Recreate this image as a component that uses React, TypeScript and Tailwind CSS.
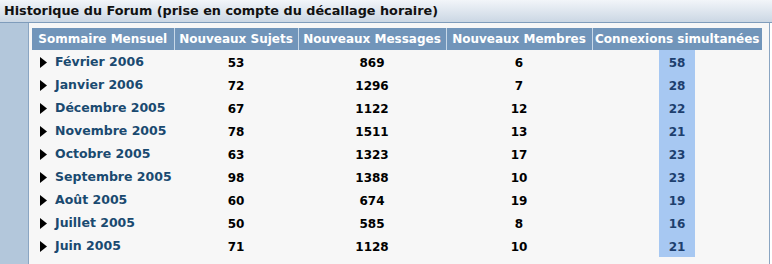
const rows = [
  { month: 'Février 2006', sujets: 53, messages: 869, membres: 6, connexions: 58 },
  { month: 'Janvier 2006', sujets: 72, messages: 1296, membres: 7, connexions: 28 },
  { month: 'Décembre 2005', sujets: 67, messages: 1122, membres: 12, connexions: 22 },
  { month: 'Novembre 2005', sujets: 78, messages: 1511, membres: 13, connexions: 21 },
  { month: 'Octobre 2005', sujets: 63, messages: 1323, membres: 17, connexions: 23 },
  { month: 'Septembre 2005', sujets: 98, messages: 1388, membres: 10, connexions: 23 },
  { month: 'Août 2005', sujets: 60, messages: 674, membres: 19, connexions: 19 },
  { month: 'Juillet 2005', sujets: 50, messages: 585, membres: 8, connexions: 16 },
  { month: 'Juin 2005', sujets: 71, messages: 1128, membres: 10, connexions: 21 },
];

const headers = ['Sommaire Mensuel', 'Nouveaux Sujets', 'Nouveaux Messages', 'Nouveaux Membres', 'Connexions simultanées'];
const widths = ['w-[142px]', 'w-[124px]', 'w-[148px]', 'w-[146px]', 'w-[170px]'];

export default function App() {
  return (
    <div className="w-[772px] h-[264px] overflow-hidden bg-white font-['DejaVu_Sans',Verdana,sans-serif] font-bold text-[12px]">
      {/* Title bar */}
      <div className="h-[23px] flex items-center px-[4px] bg-gradient-to-b from-[#f2f5f9] to-[#cbd7e4] border-b border-[#7f9cbb] text-[#111] text-[12.8px]">
        Historique du Forum (prise en compte du décallage horaire)
      </div>

      <div className="flex h-[241px]">
        <div className="w-[29px] bg-[#b3c7db] border-r border-[#8aa5c2]" />
        <div className="w-[741px] bg-[#f7f7f7] border-r border-[#8aa5c2] pl-[3px] pt-[5px]">
          <table className="border-collapse">
            <thead>
              <tr className="bg-[#7195ba] text-white h-[22px]">
                {headers.map((h, i) => (
                  <th
                    key={h}
                    className={`${widths[i]} p-0 text-center font-bold ${i > 0 ? 'border-l border-[#c8d8e8]' : ''}`}
                  >
                    {h}
                  </th>
                ))}
              </tr>
            </thead>
            <tbody>
              {rows.map((r) => (
                <tr key={r.month} className="h-[23px]">
                  <td className="p-0 pl-[8px] pt-[2px]">
                    <div className="flex items-center gap-[8px] text-[#1a4a70] text-[12.5px]">
                      <svg width="7" height="11" viewBox="0 0 7 11">
                        <path d="M0 0 L7 5.5 L0 11 Z" fill="#000" />
                      </svg>
                      {r.month}
                    </div>
                  </td>
                  <td className="p-0 pt-[2px] text-center text-black">{r.sujets}</td>
                  <td className="p-0 pt-[2px] text-center text-black">{r.messages}</td>
                  <td className="p-0 pt-[2px] text-center text-black">{r.membres}</td>
                  <td className="p-0 h-[23px]">
                    <div className="mx-auto w-[36px] h-[23px] pt-[2px] bg-[#a7c8f2] flex items-center justify-center text-[#1d3f6e]">
                      {r.connexions}
                    </div>
                  </td>
                </tr>
              ))}
            </tbody>
          </table>
        </div>
      </div>
    </div>
  );
}
